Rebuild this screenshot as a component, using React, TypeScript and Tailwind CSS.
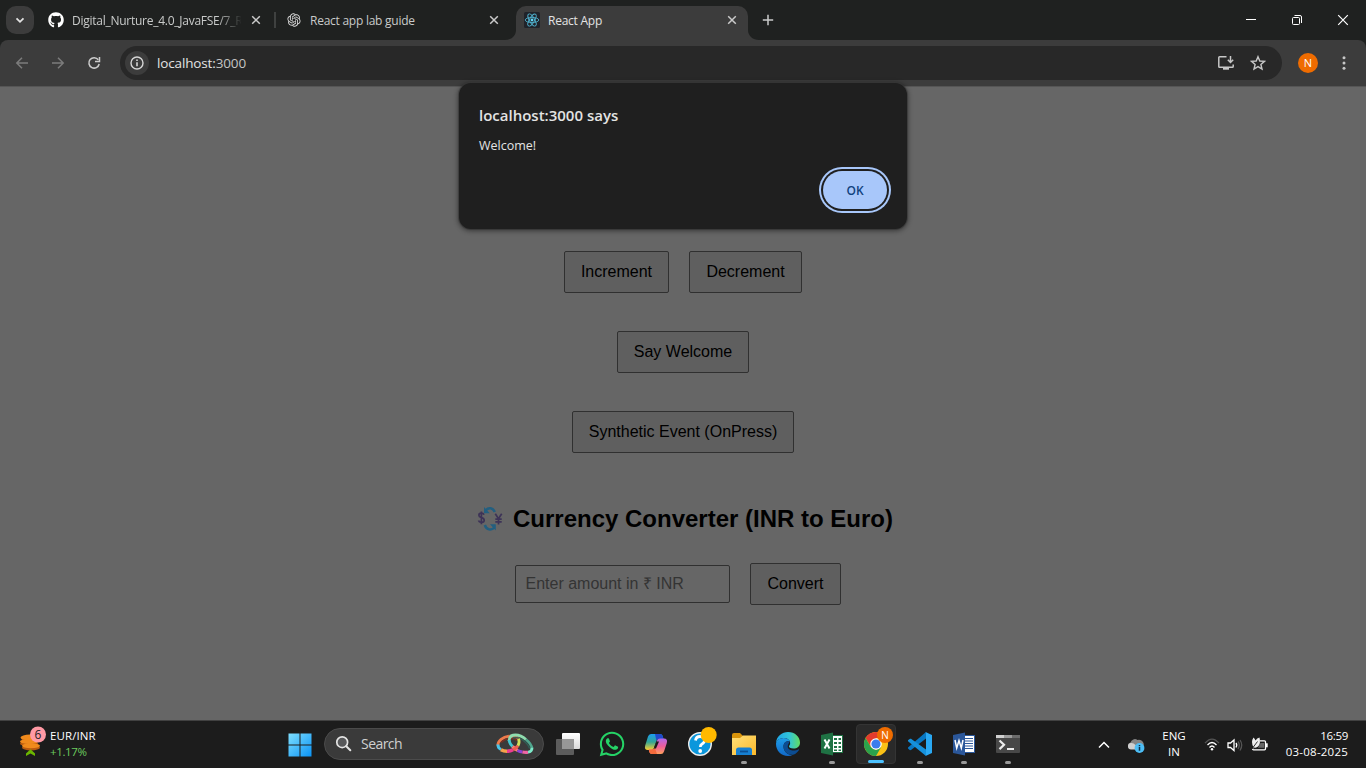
import type { ReactNode } from "react";
import { FaGithub, FaWhatsapp } from "react-icons/fa";
import { RiOpenaiFill } from "react-icons/ri";

const ui = "font-['Open_Sans','Noto_Sans',sans-serif]";

function Close() {
  return (
    <svg width="16" height="16" viewBox="0 0 16 16" className="shrink-0" stroke="#cacaca" strokeWidth="1.5">
      <path d="M4.2 4.2l7.6 7.6M11.8 4.2l-7.6 7.6" />
    </svg>
  );
}

function ReactLogo() {
  return (
    <svg width="16" height="16" viewBox="0 0 16 16" className="shrink-0">
      <rect width="16" height="16" rx="1.5" fill="#20232a" />
      <g fill="none" stroke="#4fb0cc" strokeWidth="0.9">
        <ellipse cx="8" cy="8" rx="6.8" ry="2.6" />
        <ellipse cx="8" cy="8" rx="6.8" ry="2.6" transform="rotate(60 8 8)" />
        <ellipse cx="8" cy="8" rx="6.8" ry="2.6" transform="rotate(120 8 8)" />
      </g>
      <circle cx="8" cy="8" r="1.4" fill="#61dafb" />
    </svg>
  );
}

function TabStrip() {
  return (
    <div className="flex h-10 items-start bg-[#1f2120] pl-1.5 text-[12px] text-[#c9cbca]">
      <button className="mt-1.5 flex size-7 items-center justify-center rounded-[10px] bg-[#3c3c3c]">
        <svg width="16" height="16" viewBox="0 0 16 16" fill="none" stroke="#e3e3e3" strokeWidth="1.8">
          <path d="M4.5 6.3L8 9.8l3.5-3.5" />
        </svg>
      </button>
      <div className="ml-3.5 flex h-10 w-[226px] items-center">
        <FaGithub className="size-4 shrink-0 text-white" />
        <div className="ml-2 w-[169px] pt-0.5 whitespace-nowrap [mask-image:linear-gradient(to_right,black_145px,transparent_170px)]">
          <span className="tracking-[-0.26px]">Digital_Nurture_4.0_JavaFSE/7_R</span>
        </div>
        <div className="ml-[7px]"><Close /></div>
      </div>
      <div className="mt-3 h-4 w-0.5 bg-[#3f4140]" />
      <div className="ml-[10px] flex h-10 w-[216px] items-center">
        <RiOpenaiFill className="size-4 shrink-0 text-[#dcdcdc]" />
        <span className="ml-2 flex-1 pt-0.5 tracking-[-0.25px] whitespace-nowrap">React app lab guide</span>
        <Close />
      </div>
      <svg width="14" height="34" viewBox="0 0 14 34" className="mt-1.5 shrink-0">
        <path d="M14 20v14H3c6 0 11-4 11-10z" fill="#3c3c3c" />
      </svg>
      <div className="mt-1.5 flex h-[34px] w-[232px] items-center rounded-t-[10px] bg-[#3c3c3c] pr-2 pb-1.5 pl-2 text-[#e3e3e3]">
        <ReactLogo />
        <span className="ml-2 flex-1 pt-0.5 tracking-[-0.25px] whitespace-nowrap">React App</span>
        <Close />
      </div>
      <svg width="12" height="34" viewBox="0 0 12 34" className="mt-1.5 shrink-0">
        <path d="M0 20v14h11C5 34 0 30 0 24z" fill="#3c3c3c" />
      </svg>
      <svg width="16" height="16" viewBox="0 0 16 16" className="mt-3 shrink-0" stroke="#cacaca" strokeWidth="1.5">
        <path d="M8 2.8v10.4M2.8 8h10.4" />
      </svg>
      <div className="flex-1" />
      <svg width="138" height="40" viewBox="0 0 138 40" className="shrink-0" fill="none" stroke="#fff" strokeWidth="1">
        <path d="M18 19.5h10" />
        <rect x="64.5" y="17.5" width="7" height="7" rx="1" />
        <path d="M66.5 15.5h5.5q1.500 0 1.500 1.500v6" />
        <path d="M110.200 15.200l9.600 9.600M119.800 15.200l-9.600 9.600" strokeWidth="1.200" />
      </svg>
    </div>
  );
}

function Toolbar() {
  return (
    <div className="bg-[#1f2120]">
      <div className="flex h-[46px] items-center rounded-t-lg bg-[#3c3c3c] pl-3.5">
        <svg width="88" height="16" viewBox="0 0 88 16" fill="none" strokeWidth="1.5" className="shrink-0">
          <g stroke="#7c7c7c">
            <path d="M14 8H2.800M8 2.800L2.800 8 8 13.200" />
            <path d="M38 8h11.200M44 2.800L49.200 8 44 13.200" />
          </g>
          <path d="M84.300 4.800A5.200 5.200 0 1 0 85.200 9" stroke="#cccccc" strokeWidth="1.500" />
          <path d="M85.500 2v4.500h-4.500" stroke="#cccccc" strokeWidth="1.500" />
        </svg>
        <div className="ml-[18px] flex h-[34px] w-[1162px] items-center rounded-full bg-[#282828] pr-4 pl-[5px]">
          <div className="flex size-6 items-center justify-center rounded-full bg-[#3c3c3c]">
            <svg width="16" height="16" viewBox="0 0 16 16" fill="none" stroke="#d6d6d6" strokeWidth="1.400">
              <circle cx="8" cy="8" r="6" />
              <path d="M8 7.200v4M8 4.500v1.500" strokeWidth="1.600" />
            </svg>
          </div>
          <span className="ml-2 flex-1 text-[13.5px] tracking-[-0.14px] text-[#e3e3e3]">
            localhost:<span className="text-[#c4c4c4]">3000</span>
          </span>
          <svg width="18" height="16" viewBox="0 0 18 16" fill="none" stroke="#c7c7c7" strokeWidth="1.500">
            <path d="M9.500 1.800H2.600Q1.800 1.800 1.800 2.600v8.800q0 .800.800.800h12.800q.800 0 .800-.800V9.500" />
            <path d="M13.500 1v6M10.800 4.800l2.700 2.700 2.700-2.700" />
            <path d="M6 13.500h6" strokeWidth="2.400" />
          </svg>
          <svg width="16" height="16" viewBox="0 0 16 16" className="ml-[15px]" fill="none" stroke="#c7c7c7" strokeWidth="1.400">
            <path d="M8 1.700l1.800 4.300 4.700.4-3.600 3.100 1.100 4.600L8 11.600 4 14.100l1.100-4.600L1.500 6.400 6.200 6z" />
          </svg>
        </div>
        <div className="ml-4 flex size-5 items-center justify-center rounded-full bg-[#ef6c00] text-[11px] text-white">N</div>
        <svg width="16" height="16" viewBox="0 0 16 16" className="ml-[18px]" fill="#c7c7c7">
          <circle cx="8" cy="2.800" r="1.500" />
          <circle cx="8" cy="8" r="1.500" />
          <circle cx="8" cy="13.200" r="1.500" />
        </svg>
      </div>
    </div>
  );
}

function AlertDialog() {
  return (
    <div className="absolute top-[83px] left-[459px] h-[146px] w-[448px] rounded-xl bg-[#1f1f1f] px-5 pt-5 shadow-[0_1px_5px_1px_rgba(0,0,0,0.45),0_0_0_1px_rgba(70,70,70,0.5)]">
      <div className="text-[15px] leading-6 font-semibold text-[#e3e3e3]">localhost:3000 says</div>
      <div className="mt-[9px] text-[12.5px] leading-5 text-[#e3e3e3]">Welcome!</div>
      <button className="mt-[15px] ml-[344px] flex h-[38px] w-16 items-center justify-center rounded-full bg-[#a8c7fa] pt-px text-[12px] font-semibold text-[#10427e] ring-2 ring-[#a8c7fa] ring-offset-2 ring-offset-[#1f1f1f]">
        OK
      </button>
    </div>
  );
}

function PageButton({ children, className }: { children: ReactNode; className: string }) {
  return (
    <button className={`h-[42px] shrink-0 rounded-[2px] border border-[#303030] bg-[#5f5f5f] pb-px whitespace-nowrap ${className}`}>
      {children}
    </button>
  );
}

function CurrencyIcon() {
  return (
    <svg width="26" height="26" viewBox="0 0 26 26" className="shrink-0">
      <g fill="none" stroke="#225f80" strokeWidth="2.500">
        <path d="M17.800 6C16 1.700 11.500 1 8.800 4.200" />
        <path d="M7.800 19C9.500 24 14.500 24.800 17.300 21.500" />
      </g>
      <path d="M7 1v6.200h5.800zM18.800 24.500v-6.200H13z" fill="#225f80" />
      <g fill="none" stroke="#3d3357" strokeWidth="1.700">
        <path d="M7 8.700Q6.500 7.200 4.300 7.200 1.900 7.200 1.900 9.200 1.900 10.800 4.300 11.500 7.200 12.200 7.200 14.300 7.200 16.400 4.500 16.400 2 16.400 1.500 14.600M4.400 5.500V18.200" />
        <path d="M18.300 7.700l3.200 5 3.200-5M21.500 12.500v6M18.300 13.200h6.400M18.300 15.800h6.400" />
      </g>
    </svg>
  );
}

function Page() {
  return (
    <main className="flex h-[634px] flex-col items-center border-t border-[#555] bg-[#666] pt-[164px] font-['Liberation_Sans',Arial,sans-serif] text-[16px] text-black">
      <div className="flex gap-5">
        <PageButton className="w-[105px]">Increment</PageButton>
        <PageButton className="w-[113px]">Decrement</PageButton>
      </div>
      <PageButton className="mt-[38px] w-[132px]">Say Welcome</PageButton>
      <PageButton className="mt-[38px] w-[222px]">Synthetic Event (OnPress)</PageButton>
      <h2 className="mt-[52px] flex h-7 items-center pl-1 text-[24px] font-bold whitespace-nowrap">
        <CurrencyIcon />
        <span className="ml-2.5">Currency Converter (INR to Euro)</span>
      </h2>
      <div className="mt-[30px] flex items-center gap-5 pr-[10px]">
        <input
          className="h-[38px] w-[215px] rounded-[2px] border border-[#303030] bg-[#666] pr-2.5 pb-px pl-[9.5px] text-[16px] placeholder:text-[#343434]"
          placeholder="Enter amount in ₹ INR"
        />
        <PageButton className="w-[91px]">Convert</PageButton>
      </div>
    </main>
  );
}

type State = "none" | "open" | "active";

function TaskItem({ children, state = "none" }: { children: ReactNode; state?: State }) {
  return (
    <div className="flex h-[47px] w-11 shrink-0 flex-col items-center pt-[3px]">
      <div
        className={
          state === "active"
            ? "flex h-10 w-10 flex-col items-center justify-between rounded-[4px] border border-[#343434] bg-[#2a2a2a] pt-[5px]"
            : "flex h-10 w-10 flex-col items-center justify-between pt-1.5"
        }
      >
        {children}
        {state === "active" && <div className="h-[3px] w-4 shrink-0 rounded-full bg-[#4cc2ff]" />}
        {state === "open" && <div className="h-[3px] w-1.5 shrink-0 rounded-full bg-[#9a9a9a]" />}
      </div>
    </div>
  );
}

function Glyph({ children }: { children: ReactNode }) {
  return (
    <svg width="28" height="28" viewBox="0 0 28 28" className="shrink-0 overflow-visible">
      {children}
    </svg>
  );
}

function CoinsIcon() {
  return (
    <svg width="30" height="32" viewBox="0 0 30 32" className="mb-[5px] shrink-0">
      <g fill="#b85a10">
        <ellipse cx="13" cy="21.500" rx="9" ry="3" />
        <ellipse cx="11" cy="17.500" rx="9" ry="3" />
        <ellipse cx="12.500" cy="13" rx="9" ry="3" />
      </g>
      <g fill="#f08a1c">
        <ellipse cx="13" cy="19.700" rx="9" ry="2.500" />
        <ellipse cx="11" cy="15.500" rx="9" ry="2.500" />
        <ellipse cx="12" cy="11.500" rx="9.500" ry="3" />
      </g>
      <path d="M8 30v-2.500l4.500-4.300 4.500 4.300V30l-4.500-2.500z" fill="#6bb700" />
      <circle cx="20" cy="8.500" r="8" fill="#ff99a4" />
      <text x="20" y="12.700" textAnchor="middle" fontSize="12" fill="#222">6</text>
    </svg>
  );
}

function RingsIcon() {
  return (
    <svg width="38" height="22" viewBox="0 0 38 22" className="shrink-0">
      <g fill="none" strokeWidth="2.800">
        <path d="M2 12.500C1.500 7.500 7 4 13 3.200" stroke="#ef7a4a" />
        <path d="M13 3.200q6-.7 9.500 2.300" stroke="#d4523a" />
        <path d="M5 9.500q4-3.700 9-4t7 2" stroke="#762f24" strokeWidth="1.600" />
        <path d="M13 8Q13 2 19.500 2q5.500 0 10.500 4.500" stroke="#8fdcae" />
        <path d="M30 6.500q5.500 4.500 6 9" stroke="#4fa58d" />
        <path d="M17 5q6-1.500 11.500 3.500 4.500 4 5 7" stroke="#2f6156" strokeWidth="1.400" />
        <path d="M13 7q.5 3.500 3.500 6.500" stroke="#42c6cf" />
        <path d="M16.500 13.500q2.500 2.500 5 3.800" stroke="#ff8178" strokeWidth="3.200" />
        <path d="M21.500 17.300q2.500 1.300 5 1.700" stroke="#8d43d6" strokeWidth="3.200" />
        <path d="M26.500 19q3 .7 5.500.2" stroke="#ef65a5" strokeWidth="3.200" />
        <path d="M32 19.200q4-.5 4-4.500" stroke="#7de9c9" />
        <path d="M2 11.500q-.3 3.500 3 5" stroke="#4ac6eb" strokeWidth="3" />
        <path d="M5 16.800q2.500 1.500 6 1.500" stroke="#f6a24a" strokeWidth="3.500" />
        <path d="M11 18.300q3 0 6-1.500" stroke="#ec3d91" strokeWidth="3.500" />
        <path d="M17 16.800q3-1.500 5-4" stroke="#ee5d50" strokeWidth="3.200" />
        <path d="M22 12.800q2-3.500.5-7" stroke="#cfe05a" />
      </g>
    </svg>
  );
}

function Taskbar() {
  return (
    <footer className="flex h-12 items-start border-t border-[#414141] bg-[#1c1c1c] text-white">
      <div className="flex h-[47px] w-[280px] items-center pl-[18px]">
        <CoinsIcon />
        <div className="ml-0.5 pb-px text-[11.5px] leading-4 whitespace-nowrap">
          <div className="tracking-[0.1px]">EUR/INR</div>
          <div className="tracking-[-0.35px] text-[#6ccb5f]">+1.17%</div>
        </div>
      </div>
      <div className="flex h-[47px] w-10 items-center justify-center pr-px">
        <svg width="24" height="24" viewBox="0 0 24 24">
          <defs>
            <linearGradient id="start" x1="0" y1="0" x2="1" y2="1">
              <stop offset="0" stopColor="#7fdfff" />
              <stop offset="1" stopColor="#0a93f5" />
            </linearGradient>
          </defs>
          <path d="M.5.500h11v11h-11zM12.500.500h11v11h-11zM.5 12.500h11v11h-11zM12.500 12.500h11v11h-11z" fill="url(#start)" />
        </svg>
      </div>
      <div className="mt-[7px] ml-1 flex h-8 w-[220px] items-center rounded-full border border-[#4b4b4b] bg-[#3a3a3a] pr-[9px] pl-2.5">
        <svg width="18" height="18" viewBox="0 0 18 18" fill="#57585a" stroke="#e4e4e4" strokeWidth="1.700" strokeLinecap="round">
          <circle cx="7.200" cy="7.200" r="5.400" />
          <path d="M11.300 11.300l4 4" strokeWidth="2" />
        </svg>
        <span className="ml-2 flex-1 pb-0.5 text-[14px] tracking-[-0.55px] text-[#d0d0d0]">Search</span>
        <RingsIcon />
      </div>
      <div className="ml-0.5 flex">
        <TaskItem>
          <Glyph>
            <defs>
              <linearGradient id="view" x1="0" y1="0" x2="0" y2="1"><stop offset="0" stopColor="#fff" /><stop offset="1" stopColor="#d9d9d9" /></linearGradient>
            </defs>
            <rect x="8" y="3" width="18" height="16" rx="1" fill="url(#view)" />
            <rect x="2" y="9" width="18" height="16" rx="1" fill="#5c5c5c" />
            <path d="M8 9h12v10H8z" fill="#979797" />
          </Glyph>
        </TaskItem>
        <TaskItem><FaWhatsapp className="size-7 shrink-0 text-[#25d366]" /></TaskItem>
        <TaskItem>
          <Glyph>
            <defs>
              <linearGradient id="copA" x1="0" y1="0" x2="0" y2="1">
                <stop offset="0" stopColor="#1b9df0" /><stop offset="0.500" stopColor="#33a596" /><stop offset="1" stopColor="#ffd02f" />
              </linearGradient>
              <linearGradient id="copB" x1="0" y1="0" x2="0" y2="1">
                <stop offset="0" stopColor="#b168e8" /><stop offset="0.500" stopColor="#ed5d9b" /><stop offset="1" stopColor="#ffa05c" />
              </linearGradient>
            </defs>
            <path d="M9 4h9q2 0 2.700 2l.8 3H17q-2 0-2.700 2l-2.400 7q-.7 2-2.500 2H6q-4 0-2.800-4.500L6 6.500Q6.800 4 9 4z" fill="url(#copA)" />
            <path d="M13 4h5q2 0 2.700 2l.8 3H17q-2 0-2.700 1.500z" fill="#2049cc" />
            <path d="M19 24h-9q-2 0-2.700-2l-.6-2.500H10q2 0 2.700-2l2.400-7Q15.800 8.500 18 8.500h4q4 0 2.800 4.500L22 21.500Q21.200 24 19 24z" fill="url(#copB)" />
            <path d="M15 24h-5q-2 0-2.700-2l-.6-2.500H10q2 0 2.700-2z" fill="#f46a3c" />
            <path d="M14.500 11.500h2.500l-3 7h-2.200z" fill="#1c1c1c" />
          </Glyph>
        </TaskItem>
        <TaskItem>
          <Glyph>
            <circle cx="14" cy="14" r="11.300" fill="#0b97dc" stroke="#eee" strokeWidth="1.400" />
            <path d="M9.500 10.500q.5-4 4.500-4 4.500 0 4.500 3.800 0 2.400-2.500 3.700-1.700 1-1.700 3" fill="none" stroke="#fff" strokeWidth="2.800" />
            <circle cx="14.200" cy="21" r="1.900" fill="#fff" />
            <circle cx="22.700" cy="5" r="8" fill="#ffb900" />
          </Glyph>
        </TaskItem>
        <TaskItem state="open">
          <Glyph>
            <defs>
              <linearGradient id="folder" x1="0" y1="0" x2="1" y2="1"><stop offset="0" stopColor="#ffe07a" /><stop offset="1" stopColor="#fbb92b" /></linearGradient>
            </defs>
            <path d="M2 5q0-2 2-2h6l3 3v4H2z" fill="#d9940b" />
            <path d="M2 8h8l3-2.500h13V25H2z" fill="url(#folder)" />
            <path d="M6 25v-5q0-2.500 2.500-2.500h11Q22 17.500 22 20v5z" fill="#1680d2" />
            <path d="M10 21.500h8" stroke="#0b4f94" strokeWidth="1.800" />
          </Glyph>
        </TaskItem>
        <TaskItem>
          <Glyph>
            <defs>
              <linearGradient id="edgeA" x1="0" y1="0" x2="1" y2="0"><stop offset="0" stopColor="#1fa6e8" /><stop offset="0.550" stopColor="#31c4d9" /><stop offset="1" stopColor="#62dd60" /></linearGradient>
              <linearGradient id="edgeB" x1="0" y1="0" x2="0" y2="1"><stop offset="0" stopColor="#1e9de8" /><stop offset="1" stopColor="#1168c8" /></linearGradient>
            </defs>
            <path d="M2 13C2.500 6 8 2 14 2c7 0 12 5 12 10.500 0 4-3 6-6.500 6-3 0-5-1-4.500-2.500.8-1.200 1.500-2 1-4C15.500 9.500 12.500 8 9.500 8 5.500 8 3 10.500 2 13z" fill="url(#edgeA)" />
            <path d="M2 14c0-3 3-6 7.500-6 3 0 5.500 1.500 6.300 3.500C12 10.500 9.500 13 9.500 16.500c0 5 4.500 9 9.500 8.300C17.500 25.600 15.800 26 14 26 7 26 2 20.500 2 14z" fill="url(#edgeB)" />
            <path d="M15.600 11.500C12 10.500 9.500 13 9.500 16.500c0 5.500 5.500 9.300 10.500 8 2-1 4-2.800 5-4.600.2-.6-.3-.9-.8-.5-3.500 1.800-10.500 1.300-10.500-3 0-2 1.300-2.500 1.900-4.900z" fill="#0c4d93" />
          </Glyph>
        </TaskItem>
        <TaskItem state="open">
          <Glyph>
            <rect x="13.500" y="5.500" width="11" height="17" fill="#fff" stroke="#1f7244" />
            <path d="M16 8h3v2h-3zM20.500 8h2.500v2h-2.500zM16 12h3v2h-3zM20.500 12h2.500v2h-2.500zM16 16h3v2h-3zM20.500 16h2.500v2h-2.500zM16 19.500h3v1.500h-3zM20.500 19.500h2.500v1.500h-2.500z" fill="#1f7244" />
            <path d="M3 5l12-2.500v23L3 23z" fill="#1f7244" />
            <path d="M6.500 9.500l5 9M11.500 9.500l-5 9" stroke="#fff" strokeWidth="2" />
          </Glyph>
        </TaskItem>
        <TaskItem state="active">
          <Glyph>
            <circle cx="14" cy="14" r="12" fill="#fbc116" />
            <path d="M14 14v-6h10.400A12 12 0 0 0 3.600 8L9 17z" fill="#e33b2e" />
            <path d="M3.600 8L8.800 17 14 20l5.200-3L14 26A12 12 0 0 1 3.600 8z" fill="#2ba24c" />
            <circle cx="14" cy="14" r="5.800" fill="#fff" />
            <circle cx="14" cy="14" r="4.600" fill="#3b7ded" />
            <circle cx="23" cy="5" r="8" fill="#ef6c00" />
            <text x="23" y="8.800" fontSize="10" textAnchor="middle" fill="#fff">N</text>
          </Glyph>
        </TaskItem>
        <TaskItem state="open">
          <Glyph>
            <path d="M20 8.500L5 20l-1 .2L2 18.500v-1L20 2z" fill="#0878c4" />
            <path d="M20 19.500L5 8.700H4L2 10.300v1L20 26z" fill="#1691dc" />
            <path d="M19.500 2L26 5v18l-6.500 3q.5-.5.500-1.500v-21q0-1-.5-1.500z" fill="#2aa9f3" />
          </Glyph>
        </TaskItem>
        <TaskItem state="open">
          <Glyph>
            <rect x="13.500" y="5.500" width="11" height="17" fill="#fff" stroke="#2b579a" />
            <path d="M15 8.500h8M15 11h8M15 13.500h8M15 16h8M15 18.500h8" stroke="#2b579a" strokeWidth="1.100" />
            <path d="M3 5l12-2.500v23L3 23z" fill="#2b579a" />
            <path d="M5 10l1.700 8 2.300-7.500 2.300 7.500 1.700-8" fill="none" stroke="#fff" strokeWidth="1.500" />
          </Glyph>
        </TaskItem>
        <TaskItem state="open">
          <Glyph>
            <rect x="2" y="5" width="24" height="18" rx="1" fill="#484848" />
            <path d="M2 5h8v3H2z" fill="#d0d0d0" />
            <path d="M10 5h8v3h-8z" fill="#9c9c9c" />
            <path d="M18 5h8v3h-8z" fill="#6c6c6c" />
            <path d="M5.500 10.500l4.500 4.300-4.500 4.300" fill="none" stroke="#eee" strokeWidth="2.200" />
            <path d="M13 19h7" stroke="#fff" strokeWidth="1.800" />
          </Glyph>
        </TaskItem>
      </div>
      <div className="flex h-[47px] flex-1 items-center pl-[66px] text-[11px]">
        <svg width="16" height="16" viewBox="0 0 16 16" fill="none" stroke="#fff" strokeWidth="1.500">
          <path d="M3 10.500l5-5 5 5" />
        </svg>
        <svg width="18" height="16" viewBox="0 0 18 16" className="ml-[15px] shrink-0">
          <path d="M4 12a3.300 3.300 0 0 1-.5-6.500A4.500 4.500 0 0 1 10.500 3a3.500 3.500 0 0 1 3 9z" fill="#858585" />
          <path d="M4 12.500a3.300 3.300 0 0 1-.5-6.500q3-.5 5 2L12 12.500z" fill="#cfcfcf" />
          <circle cx="12.500" cy="11" r="4.900" fill="#4cbdf5" />
          <path d="M12.500 10v3.700M12.500 7.900v1.300" stroke="#10304a" strokeWidth="1.500" />
        </svg>
        <div className="ml-[14px] w-[30px] pb-px text-center text-[11.5px] leading-4">
          <div>ENG</div>
          <div>IN</div>
        </div>
        <svg width="66" height="18" viewBox="0 0 66 18" className="ml-[15px] shrink-0" fill="none" stroke="#fff" strokeWidth="1.300">
          <path d="M1 7.200Q8-1 15 7.200" stroke="#555" />
          <path d="M3.500 9Q8 4 12.500 9M5.500 11.500Q8 8.500 10.500 11.500" />
          <circle cx="8" cy="13.300" r="1.200" fill="#fff" stroke="none" />
          <path d="M24 7h2.500L30 4v10.500L26.500 11.500H24z" />
          <path d="M32 7q1.500 2 0 4.500" />
          <path d="M34 5.500q2.500 3.500 0 7.500M36 4q3.500 5 0 10.500" stroke="#555" />
          <path d="M56 4.800h4.500q1 0 1 1v7q0 1-1 1h-11q-1 0-1-1" />
          <path d="M62.700 7.300v4" strokeWidth="2" />
          <path d="M56.500 7h3.500v4.800h-6z" fill="#666" stroke="none" />
          <path d="M49.500 11q-3-5 0-9.500 1.500 1.500 2 3 1.500-2.500 4-3 1.500 6-1.500 9-1.500 1.500-4 1l-1.500 2" fill="#eee" stroke="none" />
          <path d="M47.500 13.500l6-8" stroke="#1c1c1c" strokeWidth="0.900" />
        </svg>
        <div className="mr-[18px] ml-auto pb-px text-right text-[11.5px] leading-4 whitespace-nowrap">
          <div className="tracking-[-0.3px]">16:59</div>
          <div className="tracking-[0.22px]">03-08-2025</div>
        </div>
      </div>
    </footer>
  );
}

export default function App() {
  return (
    <div className={`relative h-[768px] w-[1366px] overflow-hidden bg-[#1f2120] ${ui}`}>
      <TabStrip />
      <Toolbar />
      <Page />
      <Taskbar />
      <AlertDialog />
    </div>
  );
}
